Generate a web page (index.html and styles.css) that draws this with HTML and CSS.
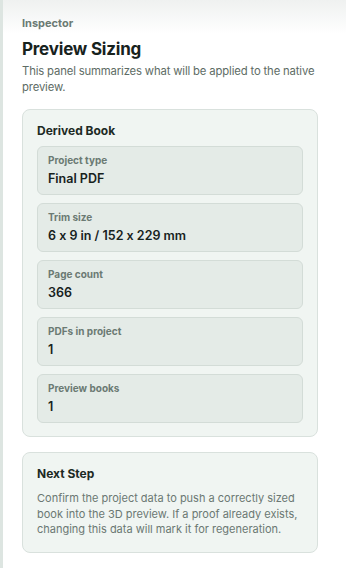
FILE: index.html
```html
<!DOCTYPE html>
<html lang="en">
<head>
    <meta charset="UTF-8">
    <meta name="viewport" content="width=device-width, initial-scale=1.0">
    <title>Inspector</title>
    <link rel="stylesheet" href="styles.css">
</head>
<body>
<div class="panel">
    <div class="eyebrow">Inspector</div>
    <h1 class="title">Preview Sizing</h1>
    <p class="desc">This panel summarizes what will be applied to the native preview.</p>

    <section class="card">
        <h2 class="card_title">Derived Book</h2>
        <div class="fields">
            <div class="field">
                <div class="field_label">Project type</div>
                <div class="field_value">Final PDF</div>
            </div>
            <div class="field">
                <div class="field_label">Trim size</div>
                <div class="field_value">6 x 9 in / 152 x 229 mm</div>
            </div>
            <div class="field">
                <div class="field_label">Page count</div>
                <div class="field_value">366</div>
            </div>
            <div class="field">
                <div class="field_label">PDFs in project</div>
                <div class="field_value">1</div>
            </div>
            <div class="field">
                <div class="field_label">Preview books</div>
                <div class="field_value">1</div>
            </div>
        </div>
    </section>

    <section class="card card_next">
        <h2 class="card_title">Next Step</h2>
        <p class="card_text">Confirm the project data to push a correctly sized book into the 3D preview. If a proof already exists, changing this data will mark it for regeneration.</p>
    </section>
</div>
</body>
</html>
```

FILE: styles.css
```css
body {
    margin: 0;
    background: #fff;
    font-family: Inter, "Noto Sans", sans-serif;
    font-feature-settings: "calt" 0;
    color: #17221d;
}
h1, h2, p { margin: 0; }

.panel {
    min-height: 568px;
    box-sizing: border-box;
    padding: 16px 28px 16px 19px;
    border-left: 3px solid #dde5e1;
    background: linear-gradient(to bottom, #eff1f0 0, #fff 34px);
}

.eyebrow {
    font-size: 11px;
    font-weight: 700;
    color: #6b7a73;
    line-height: 14px;
}
.title {
    margin-top: 8px;
    font-size: 17px;
    font-weight: 700;
    line-height: 22px;
    letter-spacing: -0.2px;
}
.desc {
    margin-top: 4px;
    margin-right: -4px;
    font-size: 11.3px;
    line-height: 15.5px;
    letter-spacing: -0.15px;
    color: #5e6c65;
}

.card {
    margin-top: 14px;
    background: #f0f5f2;
    border: 1px solid #d9e1dd;
    border-radius: 8px;
    padding: 13px 14px 13px 14px;
}
.card_title {
    font-size: 12px;
    font-weight: 700;
    line-height: 15px;
    color: #1d2a24;
}
.fields {
    margin-top: 8px;
    display: flex;
    flex-direction: column;
    gap: 8px;
}
.field {
    background: #e4ebe7;
    border: 1px solid #d3dcd7;
    border-radius: 6px;
    padding: 7px 10px 7px 10px;
}
.field_label {
    font-size: 10px;
    font-weight: 700;
    line-height: 13px;
    color: #6b7a73;
}
.field_value {
    margin-top: 4px;
    font-size: 12.5px;
    font-weight: 600;
    line-height: 16px;
    color: #17221d;
}

.card_next {
    margin-top: 15px;
    padding-bottom: 14px;
}
.card_text {
    margin-top: 10px;
    font-size: 11px;
    line-height: 15.5px;
    color: #6b7873;
}
```
